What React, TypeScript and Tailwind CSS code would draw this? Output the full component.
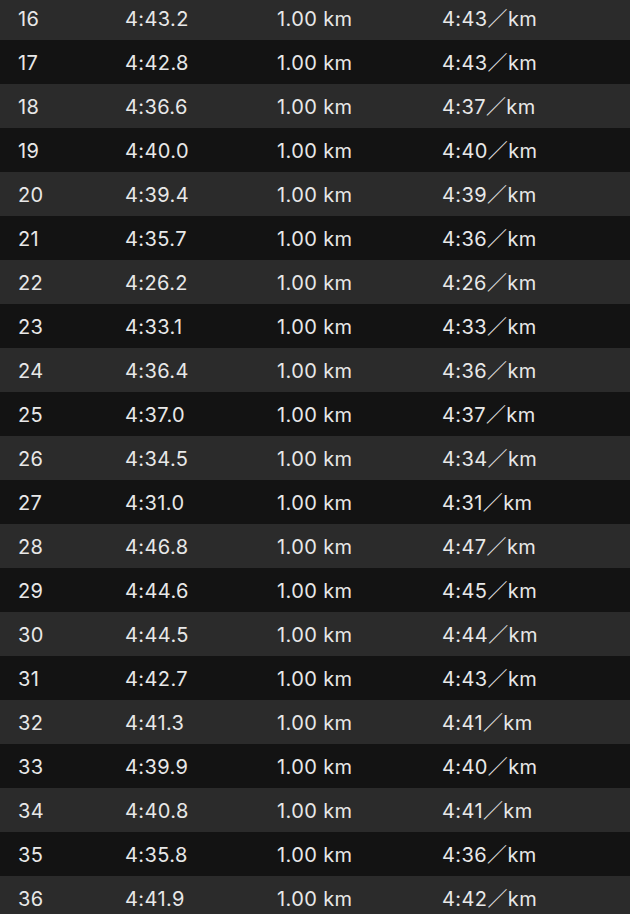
import type React from "react";

const splits: [number, string, string, string][] = [
    [16, "4:43.2", "1.00 km", "4:43"],
    [17, "4:42.8", "1.00 km", "4:43"],
    [18, "4:36.6", "1.00 km", "4:37"],
    [19, "4:40.0", "1.00 km", "4:40"],
    [20, "4:39.4", "1.00 km", "4:39"],
    [21, "4:35.7", "1.00 km", "4:36"],
    [22, "4:26.2", "1.00 km", "4:26"],
    [23, "4:33.1", "1.00 km", "4:33"],
    [24, "4:36.4", "1.00 km", "4:36"],
    [25, "4:37.0", "1.00 km", "4:37"],
    [26, "4:34.5", "1.00 km", "4:34"],
    [27, "4:31.0", "1.00 km", "4:31"],
    [28, "4:46.8", "1.00 km", "4:47"],
    [29, "4:44.6", "1.00 km", "4:45"],
    [30, "4:44.5", "1.00 km", "4:44"],
    [31, "4:42.7", "1.00 km", "4:43"],
    [32, "4:41.3", "1.00 km", "4:41"],
    [33, "4:39.9", "1.00 km", "4:40"],
    [34, "4:40.8", "1.00 km", "4:41"],
    [35, "4:35.8", "1.00 km", "4:36"],
    [36, "4:41.9", "1.00 km", "4:42"],
];

const App: React.FC = () => {
    return (
        <div className="w-[630px] h-[914px] overflow-hidden bg-[#131313] text-[#e8e8e8] text-[20px] tracking-[0.4px] font-['Inter','Noto_Sans_CJK_JP',sans-serif]">
            <div className="-mt-[4px]">
                {splits.map(([km, time, dist, pace], i) => (
                    <div
                        key={km}
                        className={`flex items-center h-[44px] pt-[1px] ${i % 2 === 0 ? "bg-[#2b2b2b]" : "bg-[#131313]"}`}
                    >
                        <span className="w-[125px] pl-[18px]">{km}</span>
                        <span className="w-[152px]">{time}</span>
                        <span className="w-[165px]">{dist}</span>
                        <span>{pace}／km</span>
                    </div>
                ))}
            </div>
        </div>
    );
};

export default App;
